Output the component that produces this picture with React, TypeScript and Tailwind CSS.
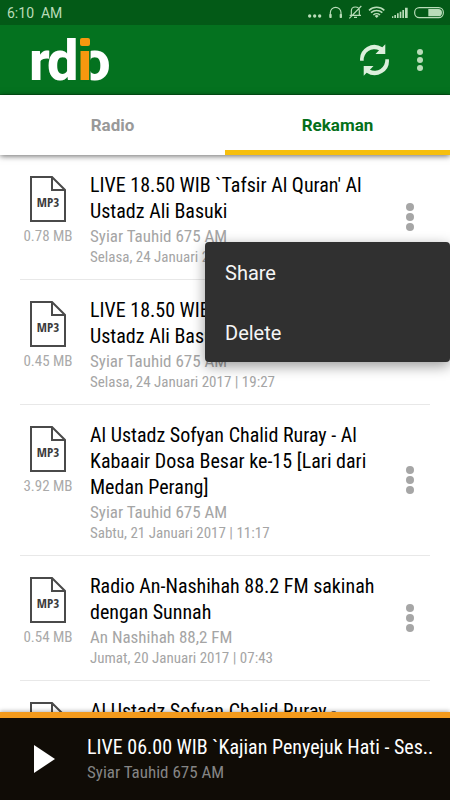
import { useState } from "react"
import { clsx } from "clsx"

type Recording = {
  title: string
  station: string
  date: string
  size: string
}

const recordings: Recording[] = [
  { title: "LIVE 18.50 WIB `Tafsir Al Quran' Al Ustadz Ali Basuki", station: "Syiar Tauhid 675 AM", date: "Selasa, 24 Januari 2017 | 19:50", size: "0.78 MB" },
  { title: "LIVE 18.50 WIB `Tafsir Al Quran' Al Ustadz Ali Basuki", station: "Syiar Tauhid 675 AM", date: "Selasa, 24 Januari 2017 | 19:27", size: "0.45 MB" },
  { title: "Al Ustadz Sofyan Chalid Ruray - Al Kabaair Dosa Besar ke-15 [Lari dari Medan Perang]", station: "Syiar Tauhid 675 AM", date: "Sabtu, 21 Januari 2017 | 11:17", size: "3.92 MB" },
  { title: "Radio An-Nashihah 88.2 FM sakinah dengan Sunnah", station: "An Nashihah 88,2 FM", date: "Jumat, 20 Januari 2017 | 07:43", size: "0.54 MB" },
  { title: "Al Ustadz Sofyan Chalid Ruray - Kabaair Dosa Besar", station: "Syiar Tauhid 675 AM", date: "Jumat, 20 Januari 2017 | 06:10", size: "2.10 MB" },
]

function StatusIcons() {
  return (
    <svg viewBox="0 0 450 75" className="h-[25px] w-[150px]" fill="#b9dcb9" aria-hidden="true">
      <circle cx="29" cy="48" r="5" />
      <circle cx="44" cy="48" r="5" />
      <circle cx="59" cy="48" r="5" />
      <g fill="none" stroke="#b9dcb9" strokeWidth="3.5">
        <path d="M91 50V38a16 16 0 0 1 32 0v12" />
        <path d="M149 46h34M154 45V33c0-8 5-12 12-12s12 4 12 12v12M162 52h9M148 55l36-37" />
        <path d="M207 31a34 34 0 0 1 46 0M213 38a25 25 0 0 1 34 0M220 45a15 15 0 0 1 20 0" strokeWidth="4.5" />
        <rect x="344" y="23" width="86" height="30" rx="14" />
      </g>
      <rect x="88" y="42" width="7" height="12" rx="2" />
      <rect x="119" y="42" width="7" height="12" rx="2" />
      <path d="M224 48a9 9 0 0 1 12 0l-6 6z" />
      <path d="M276 54v-5h4v5zM283 54v-9h5v9zM291 54v-14h5v14zM299 54v-19h5v19zM307 54v-24h5v24zM315 54v-31h8v31z" />
      <path d="M385 27h30a11 11 0 0 1 0 22h-30z" />
    </svg>
  )
}

function Logo() {
  return (
    <svg viewBox="0 0 80 44" className="h-11 w-20 overflow-visible font-['Roboto',sans-serif] text-[56px] font-extrabold" role="img" aria-label="rdio">
      <text x="-2" y="42" fill="#fff">r</text>
      <text x="16" y="42" fill="#fff">d</text>
      <text x="48" y="42" fill="#fff">o</text>
      <text x="46" y="42" fill="#f7980f" stroke="#04721f" strokeWidth="3" paintOrder="stroke">ı</text>
      <rect x="49" y="0" width="10" height="8" rx="2" fill="#f7980f" />
    </svg>
  )
}

function RefreshIcon() {
  return (
    <svg viewBox="0 0 94 104" className="h-[34px] w-[31px]" fill="#dcefdc" aria-hidden="true">
      <path d="M3 54A44 44 0 0 1 71 13L80 4V34L50 34L61 22A33 33 0 0 0 14 54Z" />
      <path d="M3 54A44 44 0 0 1 71 13L80 4V34L50 34L61 22A33 33 0 0 0 14 54Z" transform="rotate(180 47 52)" />
    </svg>
  )
}

function Mp3Icon() {
  return (
    <svg viewBox="0 0 38 47" className="h-[47px] w-[38px]" fill="none" stroke="#4a4a4a" strokeWidth="2" aria-hidden="true">
      <path d="M2 2h21l13 13v31H2zM23 2v13h13" />
      <text x="19" y="32" textAnchor="middle" fill="#3c3c3c" stroke="none" className="font-['Open_Sans_Condensed','Roboto_Condensed','Roboto',sans-serif] text-[13px] font-semibold">MP3</text>
    </svg>
  )
}

function Dots() {
  return (
    <svg viewBox="0 0 8 28" className="h-7 w-2" fill="#a6a6a6" aria-hidden="true">
      <circle cx="4" cy="4" r="4" />
      <circle cx="4" cy="14" r="4" />
      <circle cx="4" cy="24" r="4" />
    </svg>
  )
}

function RecordingRow({ item, menuOpen, onToggle }: { item: Recording; menuOpen: boolean; onToggle: () => void }) {
  return (
    <li className="relative mx-5 flex border-b border-[#e8e8e8] pt-4 pb-3">
      <div className="flex w-14 shrink-0 flex-col items-center pt-1">
        <Mp3Icon />
        <span className="mt-1 text-[15px] leading-5 whitespace-nowrap text-[#aaaaaa]">{item.size}</span>
      </div>
      <div className="ml-3.5 min-w-0 flex-1">
        <h2 className="pt-px text-xl leading-[26px] text-black">{item.title}</h2>
        <p className="text-[17px] leading-6 text-[#a5a5a5]">{item.station}</p>
        <p className="text-[15px] leading-[19px] text-[#a5a5a5]">{item.date}</p>
      </div>
      <button type="button" onClick={onToggle} aria-label="Options" aria-expanded={menuOpen} className="-mt-4 -mb-3 flex w-10 shrink-0 items-center justify-center">
        <Dots />
      </button>
      {menuOpen && (
        <div className="absolute top-[87px] -right-5 z-10 flex w-[245px] flex-col rounded-sm bg-[#303030] font-['Roboto',sans-serif] text-xl text-[#f5f5f5] shadow-[0_4px_14px_rgba(0,0,0,0.4)]">
          <button type="button" className="h-[60px] px-5 pt-0.5 text-left">Share</button>
          <button type="button" className="h-[60px] px-5 pt-0.5 text-left">Delete</button>
        </div>
      )}
    </li>
  )
}

export default function App() {
  const [tab, setTab] = useState("Rekaman")
  const [openRow, setOpenRow] = useState<number | null>(0)

  return (
    <div className="flex h-screen flex-col bg-white font-['Roboto_Condensed','Liberation_Sans_Narrow','Roboto',sans-serif]">
      <div className="flex h-[25px] shrink-0 items-center justify-between bg-[#035a17] pl-[7px] font-['Roboto',sans-serif] text-sm text-[#b9dcb9]">
        <span>6:10&nbsp; AM</span>
        <StatusIcons />
      </div>

      <header className="flex h-[70px] shrink-0 items-center border-b border-[#035a17] bg-[#04721f] pl-[31px]">
        <Logo />
        <button type="button" aria-label="Refresh" className="ml-auto flex">
          <RefreshIcon />
        </button>
        <button type="button" aria-label="More" className="flex w-[60px] justify-center">
          <svg viewBox="0 0 6 22" className="h-[22px] w-1.5" fill="#b9dcb9" aria-hidden="true">
            <circle cx="3" cy="3" r="3" />
            <circle cx="3" cy="11" r="3" />
            <circle cx="3" cy="19" r="3" />
          </svg>
        </button>
      </header>

      <nav className="z-10 flex h-[60px] shrink-0 bg-white font-['Roboto',sans-serif] text-[17px] font-bold shadow-[0_1px_6px_rgba(0,0,0,0.6)]">
        {["Radio", "Rekaman"].map((name) => (
          <button
            key={name}
            type="button"
            onClick={() => setTab(name)}
            className={clsx("flex-1 border-b-[5px] pt-1.5", tab === name ? "border-[#f6bf0e] text-[#04701a]" : "border-transparent text-[#999999]")}
          >
            {name}
          </button>
        ))}
      </nav>

      <ul className="min-h-0 flex-1 overflow-hidden">
        {recordings.map((item, i) => (
          <RecordingRow key={i} item={item} menuOpen={openRow === i} onToggle={() => setOpenRow(openRow === i ? null : i)} />
        ))}
      </ul>

      <footer className="z-20 flex h-[88px] shrink-0 items-center border-t-[6px] border-[#f39a1c] bg-[#100c06] shadow-[0_-1px_4px_rgba(0,0,0,0.3)]">
        <button type="button" aria-label="Play" className="flex w-[87px] shrink-0 justify-center">
          <svg viewBox="0 0 22 28" className="h-7 w-[22px]" fill="#fff" aria-hidden="true">
            <path d="M1 0L22 14L1 28z" />
          </svg>
        </button>
        <div className="min-w-0 flex-1">
          <p className="text-xl leading-[26px] whitespace-nowrap text-white">LIVE 06.00 WIB `Kajian Penyejuk Hati - Ses..</p>
          <p className="text-[17px] leading-6 text-[#858585]">Syiar Tauhid 675 AM</p>
        </div>
      </footer>
    </div>
  )
}
